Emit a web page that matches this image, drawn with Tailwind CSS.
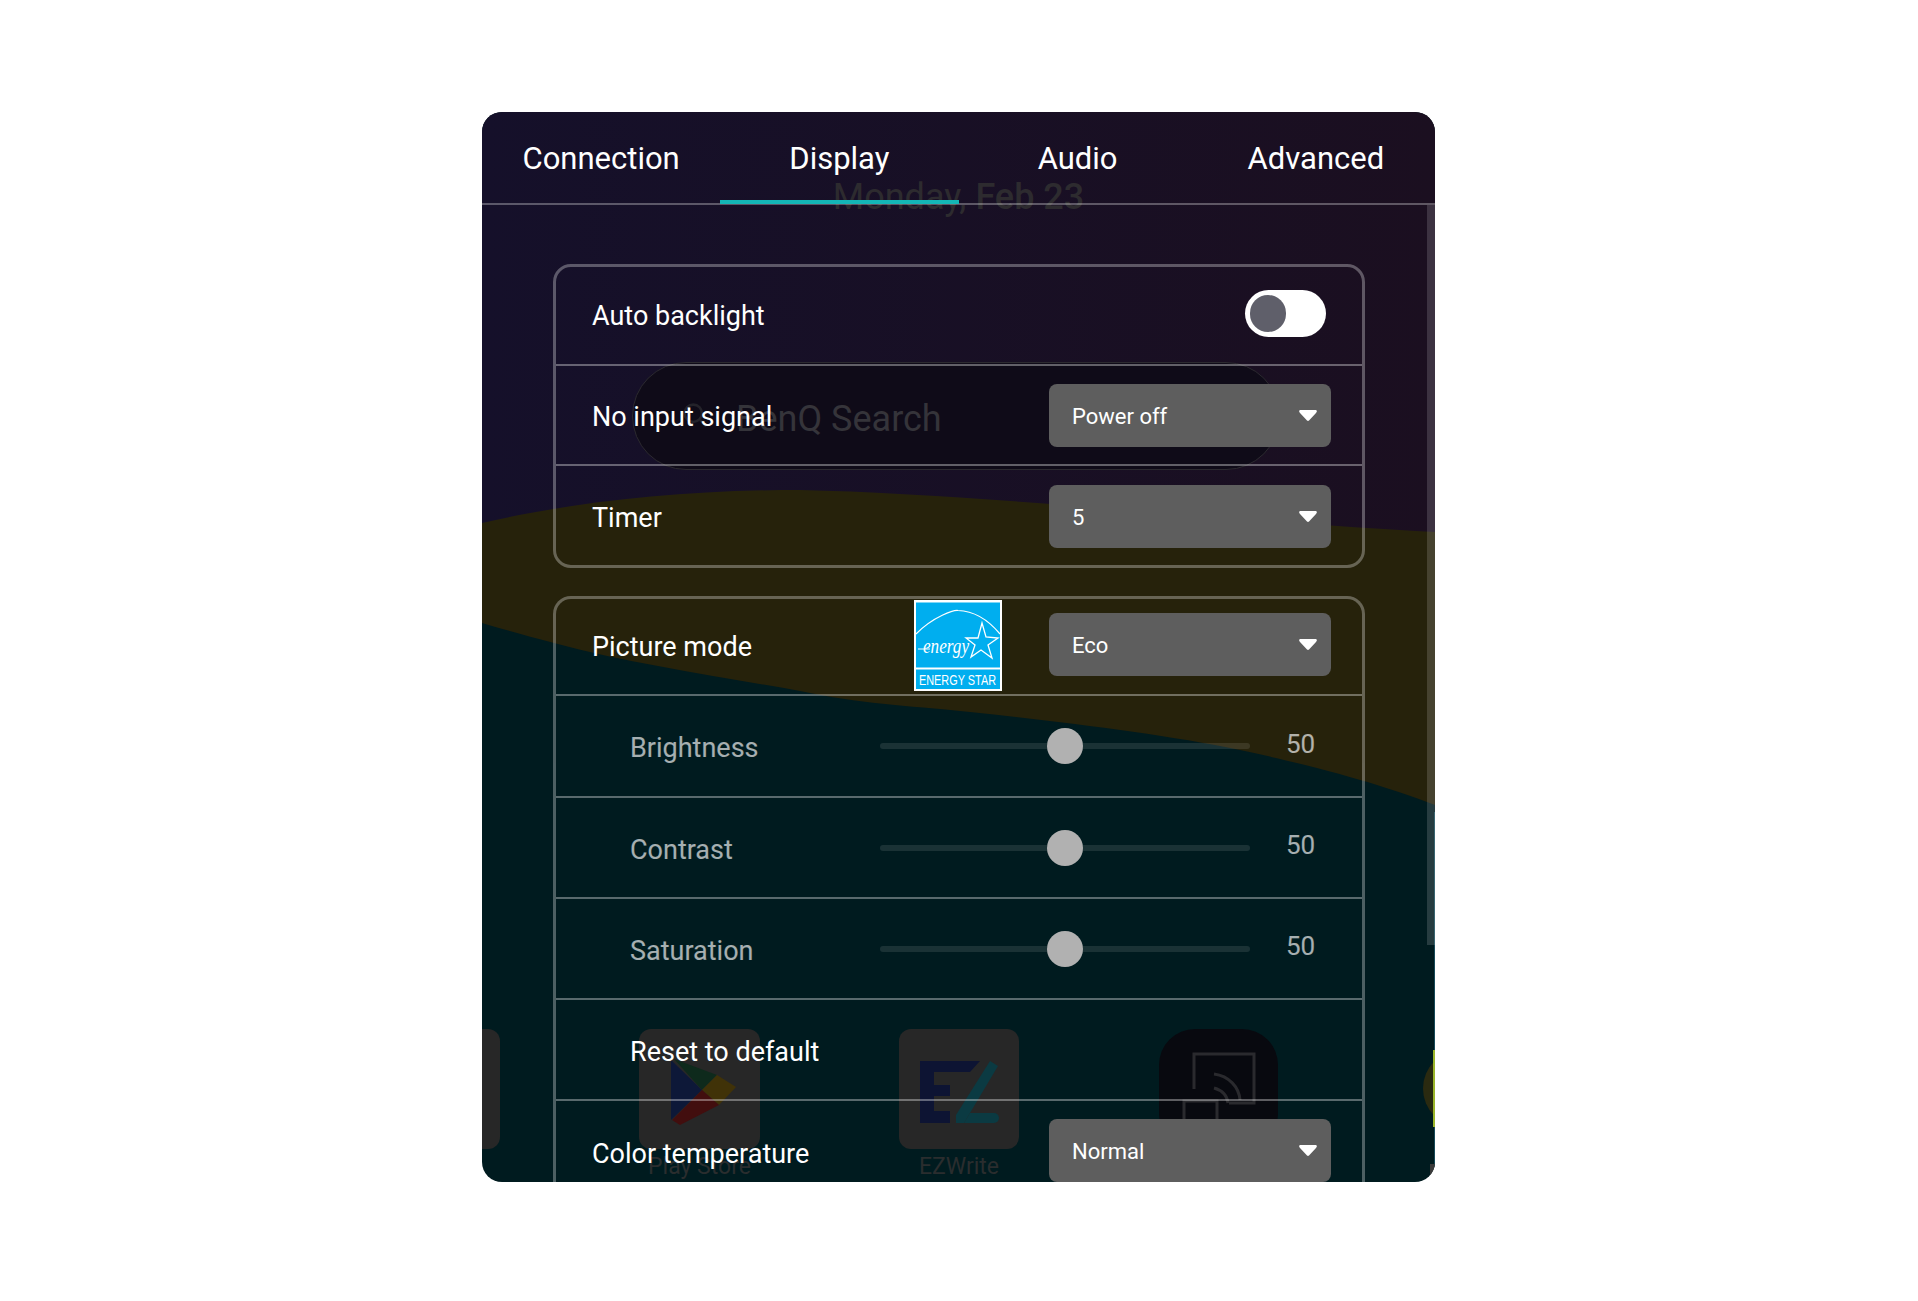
<!DOCTYPE html>
<html>
<head>
<meta charset="utf-8">
<script src="https://cdn.jsdelivr.net/npm/@tailwindcss/browser@4"></script>
</head>
<body class="bg-white font-['Roboto',sans-serif]">
<div class="w-[1918px] h-[1301px] pt-[112px] pl-[482px]">
  <div class="relative w-[953px] h-[1070px] rounded-[20px] overflow-hidden bg-[#001b1f] text-white">
    <!-- wallpaper -->
    <svg class="absolute inset-0" width="953" height="1070" viewBox="0 0 953 1070">
      <defs><linearGradient id="g" x1="0" x2="1" y1="0" y2="0"><stop offset="0" stop-color="#15102a"/><stop offset="1" stop-color="#1b0f20"/></linearGradient></defs>
      <path d="M0 300H953V693C910 677 860 660 758 638C680 622 580 610 488 600C420 593 380 592 318 579C240 565 150 552 72 531C45 524 20 517 0 511Z" fill="#26220b"/>
      <path d="M0 411C90 390 200 378 318 378C500 382 760 410 953 420V0H0Z" fill="url(#g)"/>
    </svg>
    <!-- home screen behind -->
    <div class="absolute left-0 right-0 top-[64px] text-center text-[36px] leading-[42px] text-[#2d2b2f] font-medium"><span class="font-normal">Monday,</span> Feb 23</div>
    <div class="absolute left-[150px] top-[250px] w-[648px] h-[108px] rounded-[54px] bg-[#0f0b18] border border-[#2c2a30] flex items-center pl-[103px] pt-[6px] text-[36px] text-[#35343a]">BenQ Search</div>
    <svg class="absolute left-[200px] top-[290px]" width="26" height="26" viewBox="0 0 30 30" fill="none" stroke="#24232a" stroke-width="3"><circle cx="13" cy="13" r="10"/><path d="M21 21l7 7"/></svg>
    <div class="absolute -left-[100px] top-[917px] w-[118px] h-[120px] rounded-[12px] bg-[#272727]"></div>
    <div class="absolute left-[157px] top-[917px] w-[121px] h-[120px] rounded-[12px] bg-[#272727] flex items-center justify-center">
      <svg class="ml-[8px] mt-[4px]" width="65" height="68" viewBox="0 0 65 68"><path d="M0 3V63L31 33Z" fill="#0d1838"/><path d="M3 2L46 18L31 33Z" fill="#0e2a1c"/><path d="M46 18L65 30L48 48L31 33Z" fill="#403208"/><path d="M1 63L31 33L48 48L9 68Z" fill="#420e0e"/></svg>
    </div>
    <div class="absolute left-[417px] top-[917px] w-[120px] h-[120px] rounded-[12px] bg-[#272727] flex items-center justify-center">
      <svg class="mt-[6px]" width="79" height="62" viewBox="0 0 79 62"><path d="M0 0H60L50 11H14V24H30V35H14V50H30V62H0Z" fill="#0d1433"/><path d="M78 5L70 0L36 54V62H44Z" fill="#0b3a42"/><path d="M50 52H74A5 5 0 0 1 74 62H44Z" fill="#0b3a42"/></svg>
    </div>
    <div class="absolute left-[677px] top-[917px] w-[119px] h-[121px] rounded-[36px] bg-[#08090f]">
      <svg width="119" height="121" viewBox="0 0 119 121" fill="none" stroke="#2a2a2e" stroke-width="3"><path d="M35 60V25H95V74H70"/><path d="M55 45C70 47 80 58 81 71M55 59C62 61 68 66 69 74"/><rect x="25" y="72" width="33" height="30"/></svg>
    </div>
    <div class="absolute left-[157px] top-[1041px] w-[121px] text-center text-[23px] leading-[28px] text-[#2a2d2e]">Play Store</div>
    <div class="absolute left-[417px] top-[1041px] w-[120px] text-center text-[23px] leading-[28px] text-[#2a2d2e]">EZWrite</div>
    <div class="absolute left-[941px] top-[938px] w-[80px] h-[77px] rounded-full bg-[#2a2a10]"></div>
    <div class="absolute right-0 top-[700px] w-px h-[370px] bg-[#174a58]"></div>
    <div class="absolute right-0 top-[938px] w-[2px] h-[77px] bg-[#9ab52a]"></div>
    <div class="absolute right-0 bottom-0 w-[5px] h-[18px] bg-[#3a3a3a]"></div>

    <!-- scrollbar -->
    <div class="absolute right-0 top-[93px] w-[8px] h-[740px] bg-white/15"></div>

    <!-- content -->
    <div class="relative">
      <div class="grid grid-cols-4 h-[93px] border-b-2 border-white/30 text-[31px]">
        <div class="flex justify-center pt-[29px]"><span class="leading-[36px]">Connection</span></div>
        <div class="flex justify-center pt-[29px] relative"><span class="leading-[36px]">Display</span><div class="absolute left-0 right-0 -bottom-[1px] h-[4px] bg-[#14b6b6]"></div></div>
        <div class="flex justify-center pt-[29px]"><span class="leading-[36px]">Audio</span></div>
        <div class="flex justify-center pt-[29px]"><span class="leading-[36px]">Advanced</span></div>
      </div>
      <div class="pl-[71px] pr-[70px] pt-[59px] flex flex-col gap-[28px] text-[27px]">
        <div class="rounded-[18px] border-[3px] border-white/30 flex flex-col">
          <div class="h-[97px] flex items-center justify-between pl-[36px] pr-[36px]">
            <span class="pt-[1px]">Auto backlight</span>
            <div class="w-[81px] h-[47px] -mt-[4px] rounded-full bg-white flex items-center pl-[5px]"><div class="w-[36px] h-[37px] rounded-full bg-[#5f5f6a]"></div></div>
          </div>
          <div class="h-[100px] border-t-2 border-white/35 flex items-center justify-between pl-[36px] pr-[31px]">
            <span class="pt-[4px]">No input signal</span>
            <div class="w-[282px] h-[63px] rounded-[8px] bg-[#5e5e5e] flex items-center justify-between pl-[23px] pr-[14px] text-[22px]"><span class="pt-[2px]">Power off</span><svg width="18" height="11" viewBox="0 0 18 11"><path d="M2 0H16C18 0 18.500 1.500 17 3L10 10.500C9.500 11 8.500 11 8 10.500L1 3C-.500 1.500 0 0 2 0Z" fill="#fff"/></svg></div>
          </div>
          <div class="h-[101px] border-t-2 border-white/35 flex items-center justify-between pl-[36px] pr-[31px]">
            <span class="pt-[6px]">Timer</span>
            <div class="w-[282px] h-[63px] mt-[2px] rounded-[8px] bg-[#5e5e5e] flex items-center justify-between pl-[23px] pr-[14px] text-[22px]"><span class="pt-[2px]">5</span><svg width="18" height="11" viewBox="0 0 18 11"><path d="M2 0H16C18 0 18.500 1.500 17 3L10 10.500C9.500 11 8.500 11 8 10.500L1 3C-.500 1.500 0 0 2 0Z" fill="#fff"/></svg></div>
          </div>
        </div>
        <div class="rounded-t-[18px] border-[3px] border-b-0 border-white/30 flex flex-col">
          <div class="relative h-[95px] flex items-center justify-between pl-[36px] pr-[31px]">
            <span class="pt-[2px]">Picture mode</span>
            <svg class="absolute left-[358px] top-[1px]" width="88" height="91" viewBox="0 0 88 91">
              <rect width="88" height="91" fill="#fff"/>
              <rect x="2" y="2.500" width="84" height="65" fill="#00aeef"/>
              <rect x="2" y="69.500" width="84" height="19.500" fill="#00aeef"/>
              <path d="M2 34C20 16 40 10 44 10.500C62 11 76 22 86 34" fill="none" stroke="#fff" stroke-width="1.200"/>
              <path d="M52 38L64 38L68 23L72 37L84 38L74 45L78 58L67 50L57 57L61 45Z" fill="none" stroke="#fff" stroke-width="1.300"/>
              <path d="M4 49H16" fill="none" stroke="#fff" stroke-width="1"/>
              <text x="9" y="53" font-size="21" font-style="italic" fill="#fff" font-family="Liberation Serif" textLength="46" lengthAdjust="spacingAndGlyphs">energy</text>
              <text x="5" y="85" font-size="15" fill="#fff" font-family="Liberation Sans" textLength="77" lengthAdjust="spacingAndGlyphs">ENERGY STAR</text>
            </svg>
            <div class="w-[282px] h-[63px] -mt-[4px] rounded-[8px] bg-[#5e5e5e] flex items-center justify-between pl-[23px] pr-[14px] text-[22px]"><span class="pt-[2px]">Eco</span><svg width="18" height="11" viewBox="0 0 18 11"><path d="M2 0H16C18 0 18.500 1.500 17 3L10 10.500C9.500 11 8.500 11 8 10.500L1 3C-.500 1.500 0 0 2 0Z" fill="#fff"/></svg></div>
          </div>
          <div class="h-[102px] border-t-2 border-white/35 flex items-center pl-[74px] text-white/65">
            <span class="w-[250px] pt-[5px]">Brightness</span>
            <div class="relative w-[370px] h-[6px] rounded-full bg-white/10"><div class="absolute left-[167px] -top-[15px] w-[36px] h-[36px] rounded-full bg-[#b1b1b1]"></div></div>
            <span class="ml-[36px] -mt-[4px] text-[26px]">50</span>
          </div>
          <div class="h-[101px] border-t-2 border-white/35 flex items-center pl-[74px] text-white/65">
            <span class="w-[250px] pt-[5px]">Contrast</span>
            <div class="relative w-[370px] h-[6px] rounded-full bg-white/10"><div class="absolute left-[167px] -top-[15px] w-[36px] h-[36px] rounded-full bg-[#b1b1b1]"></div></div>
            <span class="ml-[36px] -mt-[4px] text-[26px]">50</span>
          </div>
          <div class="h-[101px] border-t-2 border-white/35 flex items-center pl-[74px] text-white/65">
            <span class="w-[250px] pt-[5px]">Saturation</span>
            <div class="relative w-[370px] h-[6px] rounded-full bg-white/10"><div class="absolute left-[167px] -top-[15px] w-[36px] h-[36px] rounded-full bg-[#b1b1b1]"></div></div>
            <span class="ml-[36px] -mt-[4px] text-[26px]">50</span>
          </div>
          <div class="h-[101px] border-t-2 border-white/35 flex items-center pl-[74px]">
            <span class="pt-[6px]">Reset to default</span>
          </div>
          <div class="h-[83px] border-t-2 border-white/35 flex items-start pt-[18px] justify-between pl-[36px] pr-[31px]">
            <span class="mt-[15px]">Color temperature</span>
            <div class="w-[282px] h-[63px] rounded-[8px] bg-[#5e5e5e] flex items-center justify-between pl-[23px] pr-[14px] text-[22px]"><span class="pt-[2px]">Normal</span><svg width="18" height="11" viewBox="0 0 18 11"><path d="M2 0H16C18 0 18.500 1.500 17 3L10 10.500C9.500 11 8.500 11 8 10.500L1 3C-.500 1.500 0 0 2 0Z" fill="#fff"/></svg></div>
          </div>
        </div>
      </div>
    </div>
  </div>
</div>
</body>
</html>
